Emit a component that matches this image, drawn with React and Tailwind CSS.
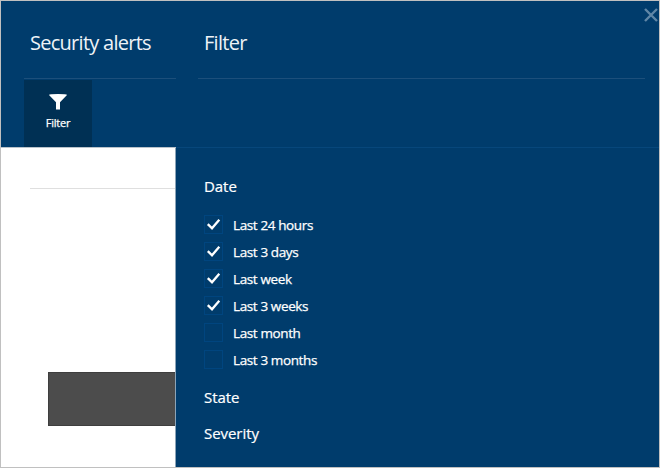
const ranges = [
  { label: 'Last 24 hours', checked: true },
  { label: 'Last 3 days', checked: true },
  { label: 'Last week', checked: true },
  { label: 'Last 3 weeks', checked: true },
  { label: 'Last month', checked: false },
  { label: 'Last 3 months', checked: false },
];

function CheckRow({ label, checked }) {
  return (
    <label className="flex h-[27px] items-center">
      <span className="flex h-[19px] w-[19px] shrink-0 items-center justify-center border border-[#00457f]">
        {checked && (
          <svg width="17" height="17" viewBox="0 0 17 17" fill="none" stroke="#fff" strokeWidth="2.3">
            <path d="M2.8 8.1 7 12.3 14.3 3.7" />
          </svg>
        )}
      </span>
      <span className="ml-[10px] whitespace-nowrap text-[13.5px] leading-[18px] tracking-[-0.38px] [-webkit-text-stroke:0.25px_white]">
        {label}
      </span>
    </label>
  );
}

function GroupTitle({ children }) {
  return (
    <h3 className="text-[15px] leading-[22px] tracking-[-0.05px] [-webkit-text-stroke:0.2px_white]">{children}</h3>
  );
}

function AlertsBlade() {
  return (
    <section className="flex w-[175px] shrink-0 flex-col overflow-hidden bg-white">
      <header className="h-[146px] shrink-0 bg-[#003c6c] pl-[23px]">
        <h1 className="h-[77px] whitespace-nowrap pl-[6px] pt-[28px] text-[20px] font-normal leading-[28px] tracking-[-0.73px] text-[#eef3f7]">
          Security alerts
        </h1>
        <div className="h-px bg-[#1c4f7b]" />
        <button className="mt-px flex h-[67px] w-[68px] flex-col items-center bg-[#003054] pt-[14px]">
          <svg width="18" height="16" viewBox="0 0 18 16" fill="#fff">
            <path d="M0 1Q0 0 9 0T18 1L11 8.3V15.5H7V8.3Z" />
          </svg>
          <span className="mt-[5px] text-[11px] leading-[16px] tracking-[-0.2px] [-webkit-text-stroke:0.25px_white]">
            Filter
          </span>
        </button>
      </header>
      <div className="h-px bg-[#b9c3cb]" />
      <div className="flex flex-1 flex-col border-r border-[#8ca4b8]">
        <div className="ml-[29px] mt-[40px] h-px bg-[#dfdfdf]" />
        <div className="ml-[47px] mt-[183px] h-[54px] border-y border-l border-[#3e3e3e] bg-[#4c4c4c]" />
      </div>
    </section>
  );
}

function FilterBlade() {
  return (
    <section className="flex min-w-0 flex-1 flex-col bg-[#003c6c]">
      <header className="relative h-[147px] shrink-0 border-b border-[#07477b] pl-[22px] pr-[14px]">
        <h2 className="h-[77px] pl-[6px] pt-[28px] text-[20px] font-normal leading-[28px] tracking-[-0.7px] text-[#eef3f7]">
          Filter
        </h2>
        <div className="h-px bg-[#1c4f7b]" />
        <button aria-label="Close" className="absolute right-[1px] top-[7px]">
          <svg width="14" height="14" viewBox="0 0 14 14" fill="none" stroke="#5f86a6" strokeWidth="2.4">
            <path d="M1 1 13 13M13 1 1 13" />
          </svg>
        </button>
      </header>
      <div className="flex flex-col pl-[28px] pt-[27px]">
        <GroupTitle>Date</GroupTitle>
        <div className="mt-[14px] flex flex-col">
          {ranges.map((r) => (
            <CheckRow key={r.label} {...r} />
          ))}
        </div>
        <div className="mt-[13px] flex flex-col gap-[14px]">
          <GroupTitle>State</GroupTitle>
          <GroupTitle>Severity</GroupTitle>
        </div>
      </div>
    </section>
  );
}

export default function App() {
  return (
    <main className="flex h-[468px] w-[660px] overflow-hidden border border-[#c0c0c0] font-['Open_Sans','Noto_Sans',sans-serif] text-white">
      <AlertsBlade />
      <FilterBlade />
    </main>
  );
}
